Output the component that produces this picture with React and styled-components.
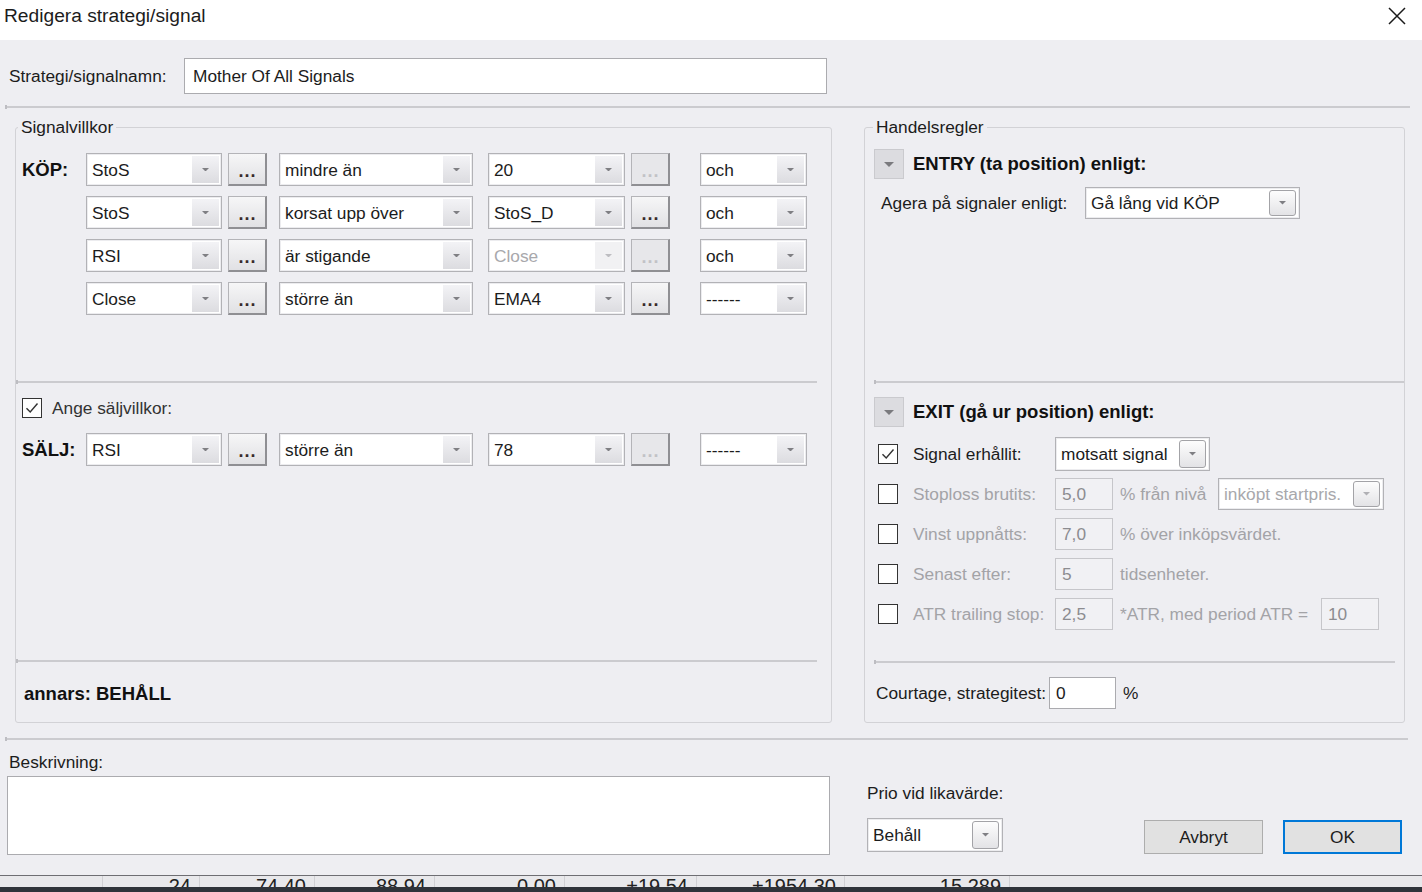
import React from "react";
import styled, { createGlobalStyle } from "styled-components";

const FONT = `"Liberation Sans", Arial, sans-serif`;

const GlobalStyle = createGlobalStyle`
  html, body { margin: 0; padding: 0; }
  body { background: #2f333a; font-family: ${FONT}; }
  *, *::before, *::after { box-sizing: border-box; }
`;

const Page = styled.div`
  width: 1422px;
  height: 892px;
  overflow: hidden;
  display: flex;
  flex-direction: column;
  background: #2f333a;
`;

const Dialog = styled.div`
  flex: none;
  height: 876px;
  display: flex;
  flex-direction: column;
  background: #eeeef2;
  border-bottom: 1px solid #6e6e73;
  font-family: ${FONT};
  font-size: 17.3px;
  line-height: 24px;
  color: #1c1c1c;
`;

const TitleBar = styled.div`
  flex: none;
  height: 40px;
  background: #fff;
  display: flex;
  justify-content: space-between;
  align-items: flex-start;
  padding: 2px 15px 0 4px;
  font-size: 19.2px;
  line-height: 27px;
`;

const CloseButton = styled.button`
  margin-top: 4px;
  width: 20px;
  height: 20px;
  padding: 0;
  border: 0;
  background: transparent;
  display: flex;
  align-items: center;
  justify-content: center;
`;

const Body = styled.div`
  flex: 1;
  display: flex;
  flex-direction: column;
  padding-top: 18px;
`;

const NameRow = styled.div`
  display: grid;
  grid-template-columns: 175px 643px;
  align-items: center;
  padding-left: 9px;
`;

const TextField = styled.input`
  width: ${(p) => p.$w}px;
  height: ${(p) => p.$h || 32}px;
  margin: 0;
  padding: 0 0 0 ${(p) => p.$pl || 6}px;
  font: inherit;
  color: ${(p) => (p.$disabled ? "#8c8c90" : "#1c1c1c")};
  background: ${(p) => (p.$disabled ? "#f1f1f4" : "#fff")};
  border: 1px solid ${(p) => (p.$disabled ? "#c6c6ca" : "#ababaf")};
  outline: none;
  flex: none;
`;

const Rule = styled.div`
  position: relative;
  flex: none;
  height: 2px;
  background: #cbcbcf;
  margin: ${(p) => p.$m};
  &::before {
    content: "";
    position: absolute;
    left: 0;
    top: -1px;
    width: 2px;
    height: 4px;
    background: #bdbdc2;
  }
`;

const Columns = styled.div`
  display: flex;
  gap: 32px;
  padding-left: 15px;
  margin-top: 7px;
`;

const Group = styled.fieldset`
  margin: 0;
  padding: 0;
  min-width: 0;
  width: ${(p) => p.$w}px;
  height: 608px;
  border: 1px solid #d2d2d6;
  border-radius: 3px;
  display: flex;
  flex-direction: column;
`;

const Legend = styled.legend`
  padding: 0 3px;
  margin-left: ${(p) => p.$offset || 2}px;
  font-size: 17.3px;
  line-height: 24px;
`;

const CondGrid = styled.div`
  display: grid;
  grid-template-columns: 64px 142px 51px 209px 143px 69px 107px;
  grid-auto-rows: 33px;
  row-gap: 10px;
  align-items: center;
  padding-left: 6px;
  margin-top: ${(p) => p.$mt}px;
`;

const SideLabel = styled.span`
  font-weight: bold;
  font-size: 18.5px;
  color: #111;
`;

const ComboBox = styled.div`
  width: ${(p) => p.$w}px;
  height: ${(p) => p.$h || 33}px;
  flex: none;
  display: flex;
  align-items: stretch;
  background: #fff;
  border: 1px solid #b2b2b6;
  box-shadow: inset 0 0 0 1px #ececef;
  color: ${(p) => (p.$disabled ? "#a8a8ac" : "#1c1c1c")};
`;

const ComboText = styled.span`
  flex: 1;
  display: flex;
  align-items: center;
  padding-left: 5px;
  white-space: nowrap;
  overflow: hidden;
`;

const DropArea = styled.span`
  flex: none;
  width: 27px;
  margin: 2px;
  display: flex;
  align-items: center;
  justify-content: center;
  background: ${(p) =>
    p.$disabled ? "#f1f1f3" : "linear-gradient(#f3f3f6, #dcdce0)"};
`;

const DropButton = styled.span`
  flex: none;
  width: 27px;
  margin: 2px 3px 2px 0;
  display: flex;
  align-items: center;
  justify-content: center;
  border: 1px solid #a3a3a7;
  border-radius: 3px;
  background: linear-gradient(#fdfdfd, #e3e3e6);
`;

const DotsButton = styled.button`
  width: 39px;
  height: 33px;
  margin: 0;
  padding: 0 0 0 1px;
  font-family: ${FONT};
  font-size: 18px;
  font-weight: bold;
  line-height: 34px;
  letter-spacing: 1px;
  color: ${(p) => (p.disabled ? "#c2c2c6" : "#3a2a2a")};
  background: ${(p) =>
    p.disabled ? "#e7e7ea" : "linear-gradient(#f6f6f7, #e1e1e4)"};
  border: 1px solid #b4b4b8;
  border-right: 2px solid #8f8f93;
  border-bottom: 2px solid #8f8f93;
  display: flex;
  justify-content: center;
  align-items: flex-start;
`;

const CheckRow = styled.label`
  display: flex;
  align-items: center;
  gap: ${(p) => p.$gap || 10}px;
  padding-left: ${(p) => p.$pl}px;
  margin-top: ${(p) => p.$mt}px;
  height: 20px;
  color: #333;
`;

const Box = styled.span`
  width: 20px;
  height: 20px;
  flex: none;
  border: 1.5px solid #333;
  background: #fff;
  display: flex;
  align-items: center;
  justify-content: center;
`;

const Otherwise = styled.div`
  font-weight: bold;
  font-size: 18.5px;
  padding-left: 8px;
  margin-top: 20px;
  color: #111;
`;

const SectionHeader = styled.div`
  display: flex;
  align-items: center;
  gap: 9px;
  padding-left: 9px;
  margin-top: ${(p) => p.$mt}px;
  font-weight: bold;
  font-size: 18.5px;
  color: #111;
`;

const CollapseButton = styled.button`
  width: 30px;
  height: 30px;
  margin: 0;
  padding: 0;
  flex: none;
  background: #dcdce0;
  border: 1px solid #cacace;
  display: flex;
  align-items: center;
  justify-content: center;
`;

const FieldRow = styled.div`
  display: flex;
  align-items: center;
  height: ${(p) => p.$h || 34}px;
  padding-left: ${(p) => p.$pl}px;
  margin-top: ${(p) => p.$mt || 0}px;
`;

const FieldLabel = styled.span`
  width: ${(p) => p.$w}px;
  flex: none;
  white-space: nowrap;
  padding-left: ${(p) => p.$pl || 0}px;
  color: ${(p) => (p.$disabled ? "#a3a3a7" : "#1c1c1c")};
`;

const Suffix = styled.span`
  width: ${(p) => p.$w}px;
  flex: none;
  padding-left: 7px;
  white-space: nowrap;
  color: ${(p) => (p.$disabled ? "#a3a3a7" : "#1c1c1c")};
`;

const ExitRows = styled.div`
  display: flex;
  flex-direction: column;
  gap: 6px;
  margin-top: 10px;
`;

const Footer = styled.div`
  display: grid;
  grid-template-columns: 860px 1fr;
  padding-left: 7px;
`;

const FooterLeft = styled.div`
  display: flex;
  flex-direction: column;
  padding-top: 10px;
`;

const FooterRight = styled.div`
  display: flex;
  flex-direction: column;
  padding-top: 41px;
  padding-right: 20px;
`;

const FooterLabel = styled.span`
  padding-left: 2px;
  margin-bottom: 2px;
`;

const Description = styled.textarea`
  width: 823px;
  height: 79px;
  margin: 0;
  resize: none;
  font: inherit;
  background: #fff;
  border: 1px solid #ababaf;
  outline: none;
`;

const ActionRow = styled.div`
  display: flex;
  align-items: flex-start;
  margin-top: 13px;
`;

const Buttons = styled.div`
  margin-left: auto;
  margin-top: 2px;
  display: flex;
  gap: 20px;
`;

const DialogButton = styled.button`
  width: 119px;
  height: 34px;
  margin: 0;
  padding: 0;
  font-family: ${FONT};
  font-size: 17.3px;
  color: #1c1c1c;
  background: #e1e1e1;
  border: ${(p) => (p.$primary ? "2px solid #0078d7" : "1px solid #adadad")};
`;

const Backdrop = styled.div`
  flex: 1;
  display: flex;
  flex-direction: column;
  background: #2f333a;
`;

const TableRow = styled.div`
  flex: none;
  height: 11px;
  display: flex;
  overflow: hidden;
  background: #e8e8eb;
  font-family: ${FONT};
  font-size: 20px;
  line-height: 20px;
  color: #222;
`;

const Cell = styled.div`
  flex: none;
  width: ${(p) => p.$w}px;
  text-align: right;
  padding-right: 8px;
  border-right: 1px solid #d0d0d4;
`;

const Caret = ({ color = "#7f7f83", w = 8 }) => (
  <svg width={w} height={w / 2} viewBox="0 0 8 4" aria-hidden="true">
    <path d="M0 0H8L4 4Z" fill={color} />
  </svg>
);

function Combo({ value, w, h, disabled, button }) {
  return (
    <ComboBox $w={w} $h={h} $disabled={disabled}>
      <ComboText>{value}</ComboText>
      {button ? (
        <DropButton>
          <Caret w={7} color={disabled ? "#b0b0b4" : "#7f7f83"} />
        </DropButton>
      ) : (
        <DropArea $disabled={disabled}>
          <Caret w={7} color={disabled ? "#bdbdc1" : "#7f7f83"} />
        </DropArea>
      )}
    </ComboBox>
  );
}

function Check({ checked }) {
  return (
    <Box>
      {checked && (
        <svg width="16" height="16" viewBox="0 0 16 16" aria-hidden="true">
          <path d="M2.5 8.2L6.2 12L13.5 3.5" fill="none" stroke="#333" strokeWidth="1.4" />
        </svg>
      )}
    </Box>
  );
}

const buyRows = [
  { a: "StoS", b: "mindre än", c: "20", cDis: false, dotsDis: true, d: "och" },
  { a: "StoS", b: "korsat upp över", c: "StoS_D", cDis: false, dotsDis: false, d: "och" },
  { a: "RSI", b: "är stigande", c: "Close", cDis: true, dotsDis: true, d: "och" },
  { a: "Close", b: "större än", c: "EMA4", cDis: false, dotsDis: false, d: "------" },
];

function ConditionRow({ label, row }) {
  return (
    <>
      <SideLabel>{label}</SideLabel>
      <Combo w={136} value={row.a} />
      <DotsButton>...</DotsButton>
      <Combo w={194} value={row.b} />
      <Combo w={137} value={row.c} disabled={row.cDis} />
      <DotsButton disabled={row.dotsDis}>...</DotsButton>
      <Combo w={107} value={row.d} />
    </>
  );
}

const exitRows = [
  { label: "Stoploss brutits:", value: "5,0", suffix: "% från nivå", sw: 105, combo: "inköpt startpris." },
  { label: "Vinst uppnåtts:", value: "7,0", suffix: "% över inköpsvärdet.", sw: 200 },
  { label: "Senast efter:", value: "5", suffix: "tidsenheter.", sw: 200 },
  { label: "ATR trailing stop:", value: "2,5", suffix: "*ATR, med period ATR =", sw: 208, extra: "10" },
];

const tableCells = [
  { w: 103, t: "" },
  { w: 97, t: "24" },
  { w: 115, t: "74.40" },
  { w: 120, t: "88.94" },
  { w: 130, t: "0.00" },
  { w: 132, t: "+19.54" },
  { w: 148, t: "+1954.30" },
  { w: 165, t: "15 289" },
];

export default function App() {
  return (
    <Page>
      <GlobalStyle />
      <Dialog>
        <TitleBar>
          <span>Redigera strategi/signal</span>
          <CloseButton aria-label="Stäng">
            <svg width="18" height="18" viewBox="0 0 18 18" aria-hidden="true">
              <path d="M1 1L17 17M17 1L1 17" stroke="#1a1a1a" strokeWidth="1.5" />
            </svg>
          </CloseButton>
        </TitleBar>
        <Body>
          <NameRow>
            <span>Strategi/signalnamn:</span>
            <TextField $w={643} $h={36} $pl={8} readOnly defaultValue="Mother Of All Signals" />
          </NameRow>
          <Rule $m="12px 12px 0 5px" />
          <Columns>
            <Group $w={817}>
              <Legend>Signalvillkor</Legend>
              <CondGrid $mt={14}>
                {buyRows.map((r, i) => (
                  <ConditionRow key={i} label={i === 0 ? "KÖP:" : ""} row={r} />
                ))}
              </CondGrid>
              <Rule $m="66px 14px 0 0" />
              <CheckRow $pl={6} $mt={15}>
                <Check checked />
                <span>Ange säljvillkor:</span>
              </CheckRow>
              <CondGrid $mt={15}>
                <ConditionRow
                  label="SÄLJ:"
                  row={{ a: "RSI", b: "större än", c: "78", dotsDis: true, d: "------" }}
                />
              </CondGrid>
              <Rule $m="194px 14px 0 0" />
              <Otherwise>annars: BEHÅLL</Otherwise>
            </Group>

            <Group $w={541}>
              <Legend $offset={8}>Handelsregler</Legend>
              <SectionHeader $mt={10}>
                <CollapseButton aria-label="Fäll ihop">
                  <Caret w={10} color="#7a7a7e" />
                </CollapseButton>
                <span>ENTRY (ta position) enligt:</span>
              </SectionHeader>
              <FieldRow $pl={16} $mt={8} $h={32}>
                <FieldLabel $w={204}>Agera på signaler enligt:</FieldLabel>
                <Combo w={215} h={32} value="Gå lång vid KÖP" button />
              </FieldRow>
              <Rule $m="162px 0 0 9px" />
              <SectionHeader $mt={14}>
                <CollapseButton aria-label="Fäll ihop">
                  <Caret w={10} color="#7a7a7e" />
                </CollapseButton>
                <span>EXIT (gå ur position) enligt:</span>
              </SectionHeader>
              <ExitRows>
                <FieldRow $pl={13}>
                  <Check checked />
                  <FieldLabel $w={157} $pl={15}>Signal erhållit:</FieldLabel>
                  <Combo w={155} h={34} value="motsatt signal" button />
                </FieldRow>
                {exitRows.map((r) => (
                  <FieldRow key={r.label} $pl={13}>
                    <Check />
                    <FieldLabel $w={157} $pl={15} $disabled>
                      {r.label}
                    </FieldLabel>
                    <TextField $w={58} $h={32} $disabled readOnly defaultValue={r.value} />
                    <Suffix $w={r.sw} $disabled>{r.suffix}</Suffix>
                    {r.combo && <Combo w={166} h={32} value={r.combo} button disabled />}
                    {r.extra && <TextField $w={58} $h={32} $disabled readOnly defaultValue={r.extra} />}
                  </FieldRow>
                ))}
              </ExitRows>
              <Rule $m="30px 9px 0 9px" />
              <FieldRow $pl={11} $mt={14} $h={32}>
                <FieldLabel $w={173}>Courtage, strategitest:</FieldLabel>
                <TextField $w={67} $h={32} readOnly defaultValue="0" />
                <Suffix $w={40}>%</Suffix>
              </FieldRow>
            </Group>
          </Columns>
          <Rule $m="15px 14px 0 5px" />
          <Footer>
            <FooterLeft>
              <FooterLabel>Beskrivning:</FooterLabel>
              <Description readOnly defaultValue="" />
            </FooterLeft>
            <FooterRight>
              <span>Prio vid likavärde:</span>
              <ActionRow>
                <Combo w={136} h={34} value="Behåll" button />
                <Buttons>
                  <DialogButton>Avbryt</DialogButton>
                  <DialogButton $primary>OK</DialogButton>
                </Buttons>
              </ActionRow>
            </FooterRight>
          </Footer>
        </Body>
      </Dialog>
      <Backdrop>
        <TableRow>
          {tableCells.map((c, i) => (
            <Cell key={i} $w={c.w}>{c.t}</Cell>
          ))}
        </TableRow>
      </Backdrop>
    </Page>
  );
}
